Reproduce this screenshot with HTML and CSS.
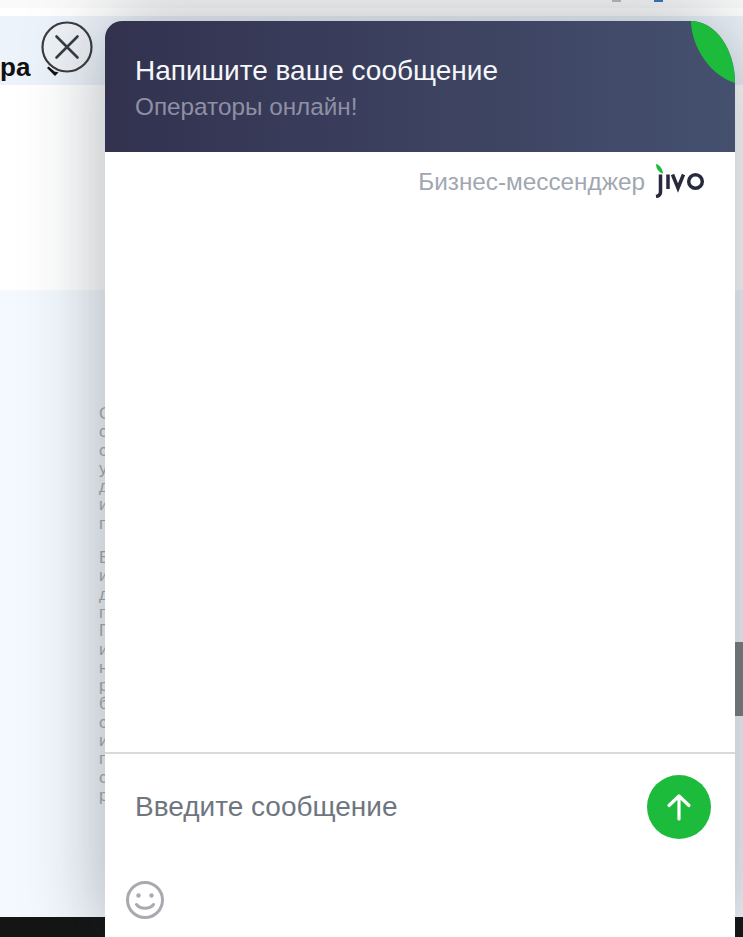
FILE: index.html
```html
<!DOCTYPE html>
<html lang="ru">
<head>
<meta charset="utf-8">
<title>Чат</title>
<link rel="stylesheet" href="styles.css">
</head>
<body>
<div class="page">
  <div class="topbar"><span class="sliver grey"></span><span class="sliver blue"></span></div>
  <nav class="nav"><span class="nav-label">ра</span>
    <svg class="chevron" width="18" height="11" viewBox="0 0 18 11"><path d="M2 2l7 7 7-7" fill="none" stroke="#111" stroke-width="2.800"/></svg>
  </nav>
  <section class="hero"></section>
  <section class="article">
    <p>С<br>с<br>с<br>у<br>д<br>и<br>п</p>
    <p>В<br>и<br>д<br>п<br>П<br>и<br>н<br>р<br>б<br>с<br>и<br>п<br>с<br>р</p>
  </section>
  <footer class="footer"></footer>
</div>
<div class="scroll-thumb"></div>

<button class="close" aria-label="Закрыть">
  <svg width="54" height="54" viewBox="0 0 54 54"><circle cx="27" cy="27" r="24.500" fill="none" stroke="#3a3c42" stroke-width="2.200"/><path d="M16.500 16.500l21 21M37.500 16.500l-21 21" stroke="#3a3c42" stroke-width="2.600" stroke-linecap="round"/></svg>
</button>

<aside class="widget">
  <header class="head">
    <svg class="leaf" width="44" height="63" viewBox="0 0 44 63"><path d="M0 0C0 20 14 52 44 62V0Z" fill="#1dbb3c"/></svg>
    <div class="title">Напишите ваше сообщение</div>
    <div class="subtitle">Операторы онлайн!</div>
  </header>
  <div class="brand">
    <span class="brand-text">Бизнес-мессенджер</span>
    <svg class="logo" width="50" height="35" viewBox="0 0 50 35" aria-label="jivo">
      <path d="M1 1c4 1 6.500 5 7 9.500C3.500 9.500 1 5 1 1z" fill="#1dbb3c"/>
      <path d="M5.500 11.500v17.500c0 2.500-1.500 4-4.500 4.500" fill="none" stroke="#262a3c" stroke-width="3.500"/>
      <path d="M13 11.500v14.500" stroke="#262a3c" stroke-width="3.500" fill="none"/>
      <path d="M17.500 11.500l5.500 13.500 5.500-13.500" stroke="#262a3c" stroke-width="3.500" fill="none"/>
      <circle cx="40.500" cy="18.500" r="6.800" stroke="#262a3c" stroke-width="3.500" fill="none"/>
    </svg>
  </div>
  <div class="messages"></div>
  <div class="composer">
    <div class="input-row">
      <span class="placeholder">Введите сообщение</span>
      <button class="send" aria-label="Отправить">
        <svg width="32" height="32" viewBox="0 0 32 32"><path d="M16 28V5M6 14.500L16 5l10 9.500" fill="none" stroke="#fff" stroke-width="3.200" stroke-linecap="round" stroke-linejoin="round"/></svg>
      </button>
    </div>
    <svg class="smile" width="40" height="40" viewBox="0 0 40 40"><circle cx="20" cy="20" r="17.500" fill="none" stroke="#a9a9b0" stroke-width="3"/><circle cx="13.500" cy="15.500" r="2.200" fill="#a9a9b0"/><circle cx="26.500" cy="15.500" r="2.200" fill="#a9a9b0"/><path d="M11.500 24.500c4 5 13 5 17 0" fill="none" stroke="#a9a9b0" stroke-width="3" stroke-linecap="round"/></svg>
  </div>
</aside>
</body>
</html>
```
FILE: styles.css
```css
html, body { margin: 0; height: 937px; overflow: hidden; background: #fff; font-family: "Liberation Sans", Arial, sans-serif; }
.page { display: flex; flex-direction: column; height: 937px; }
.topbar { height: 16px; flex: none; background: linear-gradient(#fafafa 0 8px, #fff 8px); display: flex; justify-content: flex-end; align-items: flex-start; gap: 33px; padding-right: 80px; box-sizing: border-box; }
.sliver { width: 9px; height: 2px; }
.sliver.grey { background: #b8bcc0; }
.sliver.blue { background: #3d74c4; }
.nav { height: 69px; flex: none; background: #edf3fa; display: flex; align-items: center; gap: 16px; padding-top: 33px; box-sizing: border-box; }
.nav-label { font-size: 26px; font-weight: 700; color: #111; line-height: 34px; }
.chevron { margin-top: 6px; }
.hero { height: 205px; flex: none; background: #fff; }
.article { flex: 1; background: #f3f9fe; padding: 115px 0 0 99px; font-size: 17px; line-height: 18.300px; color: #a9adb0; }
.article p { margin: 0 0 16px; }
.footer { height: 20px; flex: none; background: #151515; }
.scroll-thumb { position: absolute; right: 0; top: 642px; width: 8px; height: 74px; background: #7e8183; }
.close { position: absolute; left: 40px; top: 20px; width: 54px; height: 54px; padding: 0; border: 0; background: #eff3f7; border-radius: 50%; }
.close svg { display: block; }
.widget { position: absolute; left: 105px; top: 21px; width: 630px; height: 916px; background: #fff; border-radius: 17px 44px 0 0 / 17px 62px 0 0; box-shadow: 0 0 80px rgba(25,35,45,.36); display: flex; flex-direction: column; color: #fff; }
.head { position: relative; height: 131px; flex: none; box-sizing: border-box; padding: 34px 30px 0; overflow: hidden; background: linear-gradient(90deg, #32324f, #45506f); border-radius: 17px 44px 0 0 / 17px 62px 0 0; }
.leaf { position: absolute; right: 0; top: 0; }
.title { font-size: 28px; line-height: 32px; color: #f6f7fa; }
.subtitle { font-size: 24.300px; line-height: 28px; margin-top: 6px; color: #8e90a5; }
.brand { height: 60px; flex: none; box-sizing: border-box; padding: 12px 30px 0 0; display: flex; justify-content: flex-end; align-items: flex-start; gap: 10px; }
.brand-text { font-size: 24.300px; line-height: 36px; color: #a1a7b1; }
.logo { display: block; margin-top: -1px; }
.messages { flex: 1; }
.composer { height: 185px; flex: none; box-sizing: border-box; border-top: 2px solid #d8dadc; position: relative; }
.input-row { display: flex; justify-content: space-between; align-items: center; padding: 21px 24px 0 30px; }
.placeholder { font-size: 28px; line-height: 64px; color: #6f7680; }
.send { width: 64px; height: 64px; padding: 0; border: 0; border-radius: 50%; background: #1dbb3c; display: flex; align-items: center; justify-content: center; }
.smile { position: absolute; left: 20px; top: 126px; }
```
